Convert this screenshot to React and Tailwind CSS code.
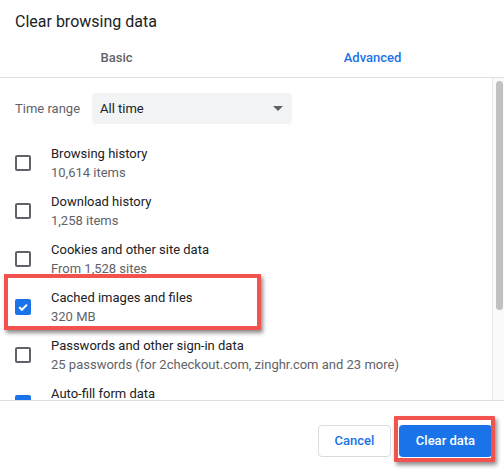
import React from "react";

const rows = [
  { title: "Browsing history", sub: "10,614 items", checked: false },
  { title: "Download history", sub: "1,258 items", checked: false },
  { title: "Cookies and other site data", sub: "From 1,528 sites", checked: false },
  { title: "Cached images and files", sub: "320 MB", checked: true, highlight: true },
  { title: "Passwords and other sign-in data", sub: "25 passwords (for 2checkout.com, zinghr.com and 23 more)", checked: false },
  { title: "Auto-fill form data", sub: "\u00a0", checked: true },
];

function Box({ checked }) {
  if (checked) {
    return (
      <div className="w-4 h-4 rounded-[2px] bg-[#1a73e8] flex items-center justify-center shrink-0">
        <svg width="12" height="12" viewBox="0 0 12 12">
          <path d="M2.2 6.1 L4.9 8.8 L10 3.6" fill="none" stroke="#fff" strokeWidth="2" />
        </svg>
      </div>
    );
  }
  return <div className="w-4 h-4 rounded-[2px] border-2 border-[#5f6368] shrink-0" />;
}

export default function App() {
  return (
    <div
      className="w-[504px] h-[472px] bg-white relative overflow-hidden text-[#202124]"
      style={{ fontFamily: "Roboto, 'Liberation Sans', Arial, sans-serif" }}
    >
      <div className="h-[44px] pl-[15px] pt-[11px] text-[16px] leading-[22px]">Clear browsing data</div>
      <div className="flex h-[34px] border-b border-[#e0e0e0] text-[13px] font-medium">
        <div className="w-[233px] shrink-0 text-center pt-[4px] text-[#5f6368]">Basic</div>
        <div className="w-[279px] shrink-0 text-center pt-[4px] text-[#1a73e8]">Advanced</div>
      </div>
      <div className="flex h-[323px] border-b border-[#e0e0e0]">
        <div className="flex-1 overflow-hidden relative">
          <div className="flex items-center h-[61px] pl-[15px]">
            <span className="text-[13px] text-[#5f6368] w-[77px]">Time range</span>
            <div className="w-[200px] h-[31px] bg-[#f1f3f4] rounded-[4px] flex items-center justify-between pl-[8px] pr-[9px] text-[13px]">
              <span>All time</span>
              <svg width="10" height="5" viewBox="0 0 10 5">
                <path d="M0 0 L10 0 L5 5 Z" fill="#5f6368" />
              </svg>
            </div>
          </div>
          {rows.map((r, i) => (
            <div key={i} className="relative flex items-center h-[48px] pl-[15px]">
              <Box checked={r.checked} />
              <div className="pl-[20px] text-[13px] leading-[19px]">
                <div className="text-[#202124]">{r.title}</div>
                <div className="text-[#5f6368]">{r.sub}</div>
              </div>
              {r.highlight && (
                <div className="absolute left-[4px] top-[-9px] w-[257px] h-[56px] border-[4px] border-[#f2534f] shadow-[2px_3px_4px_rgba(0,0,0,0.45)]" />
              )}
            </div>
          ))}
        </div>
        <div className="w-[12px] border-l border-[#e8e8e8] bg-[#fafafa] pt-[3px] pl-[3px] pr-[1px]">
          <div className="h-[229px] rounded-full bg-[#c1c1c1]" />
        </div>
      </div>
      <div className="flex justify-end gap-[8px] pt-[24px] pr-[12px]">
        <button className="w-[73px] h-[32px] rounded-[4px] border border-[#dadce0] bg-white text-[13px] font-medium text-[#1a73e8]">
          Cancel
        </button>
        <div className="relative">
          <button className="w-[93px] h-[32px] rounded-[4px] bg-[#1a73e8] text-[13px] font-medium text-white">
            Clear data
          </button>
          <div className="absolute left-[-5px] top-[-9px] w-[101px] h-[46px] border-[4px] border-[#f2534f] shadow-[2px_3px_4px_rgba(0,0,0,0.45)] rounded-[1px]" />
        </div>
      </div>
    </div>
  );
}
